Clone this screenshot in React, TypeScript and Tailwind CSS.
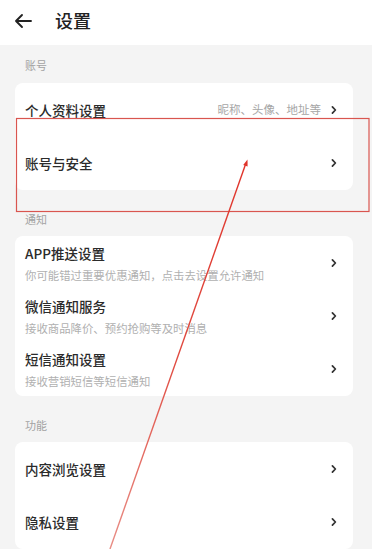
import React from "react";

const Chevron = () => (
  <svg width="6" height="10" viewBox="0 0 6 10" className="shrink-0">
    <path d="M1.4 1.8 L4.4 5 L1.4 8.2" fill="none" stroke="#333" strokeWidth="1.7" strokeLinecap="round" strokeLinejoin="round" />
  </svg>
);

const SectionLabel = ({ text, first }: { text: string; first?: boolean }) => (
  <div className={`${first ? "pt-[12px] h-[38px]" : "pt-[21px] h-[46px]"} pl-[25px] text-[11px] leading-[16px] text-[#a3a3a3]`}>
    {text}
  </div>
);

const Row = ({ title, sub, right }: { title: string; sub?: string; right?: string }) => (
  <div className="h-[53px] flex items-center pl-[10px] pr-[16px]">
    <div className="flex-1 flex flex-col min-w-0">
      <div className="text-[13.5px] leading-[20px] font-medium text-[#2b2b2b]">{title}</div>
      {sub && <div className="mt-[4px] text-[11.4px] leading-[16px] text-[#b0b0b0] whitespace-nowrap">{sub}</div>}
    </div>
    {right && <div className="text-[11.5px] text-[#a6a6a6] mr-[10px] whitespace-nowrap">{right}</div>}
    <Chevron />
  </div>
);

export default function App() {
  return (
    <div
      className="relative w-[372px] h-[549px] overflow-hidden bg-[#f4f4f4]"
      style={{ fontFamily: '"Noto Sans CJK SC", "Noto Sans", sans-serif' }}
    >
      <div className="h-[45px] bg-white flex items-center pb-[4px]">
        <svg width="20" height="16" viewBox="0 0 20 16" className="ml-[13px]">
          <path d="M18 8 H3 M9 2 L3 8 L9 14" fill="none" stroke="#222" strokeWidth="1.9" strokeLinecap="round" strokeLinejoin="round" />
        </svg>
        <div className="ml-[22px] text-[18px] font-medium text-[#222]">设置</div>
      </div>

      <SectionLabel text="账号" first />
      <div className="ml-[15px] w-[338px] bg-white rounded-[8px] py-[0.5px]">
        <Row title="个人资料设置" right="昵称、头像、地址等" />
        <Row title="账号与安全" />
      </div>

      <SectionLabel text="通知" />
      <div className="ml-[15px] w-[338px] bg-white rounded-[8px] py-[0.5px]">
        <Row title="APP推送设置" sub="你可能错过重要优惠通知，点击去设置允许通知" />
        <Row title="微信通知服务" sub="接收商品降价、预约抢购等及时消息" />
        <Row title="短信通知设置" sub="接收营销短信等短信通知" />
      </div>

      <SectionLabel text="功能" />
      <div className="ml-[15px] w-[338px] bg-white rounded-[8px] py-[0.5px]">
        <Row title="内容浏览设置" />
        <Row title="隐私设置" />
      </div>

      <svg className="absolute inset-0 pointer-events-none" width="372" height="549" viewBox="0 0 372 549">
        <defs>
          <linearGradient id="lg" gradientUnits="userSpaceOnUse" x1="247" y1="160" x2="110" y2="549">
            <stop offset="0" stopColor="#e0332a" />
            <stop offset="0.5" stopColor="#e04a40" />
            <stop offset="1" stopColor="#e88d85" />
          </linearGradient>
        </defs>
        <rect x="16.5" y="118.5" width="352.5" height="93" fill="none" stroke="#d9554f" strokeWidth="1.2" />
        <line x1="246" y1="163" x2="110" y2="549" stroke="url(#lg)" strokeWidth="1.4" />
        <polygon points="247.5,159.5 247.6,166.5 243.2,165" fill="#e0332a" />
      </svg>
    </div>
  );
}
